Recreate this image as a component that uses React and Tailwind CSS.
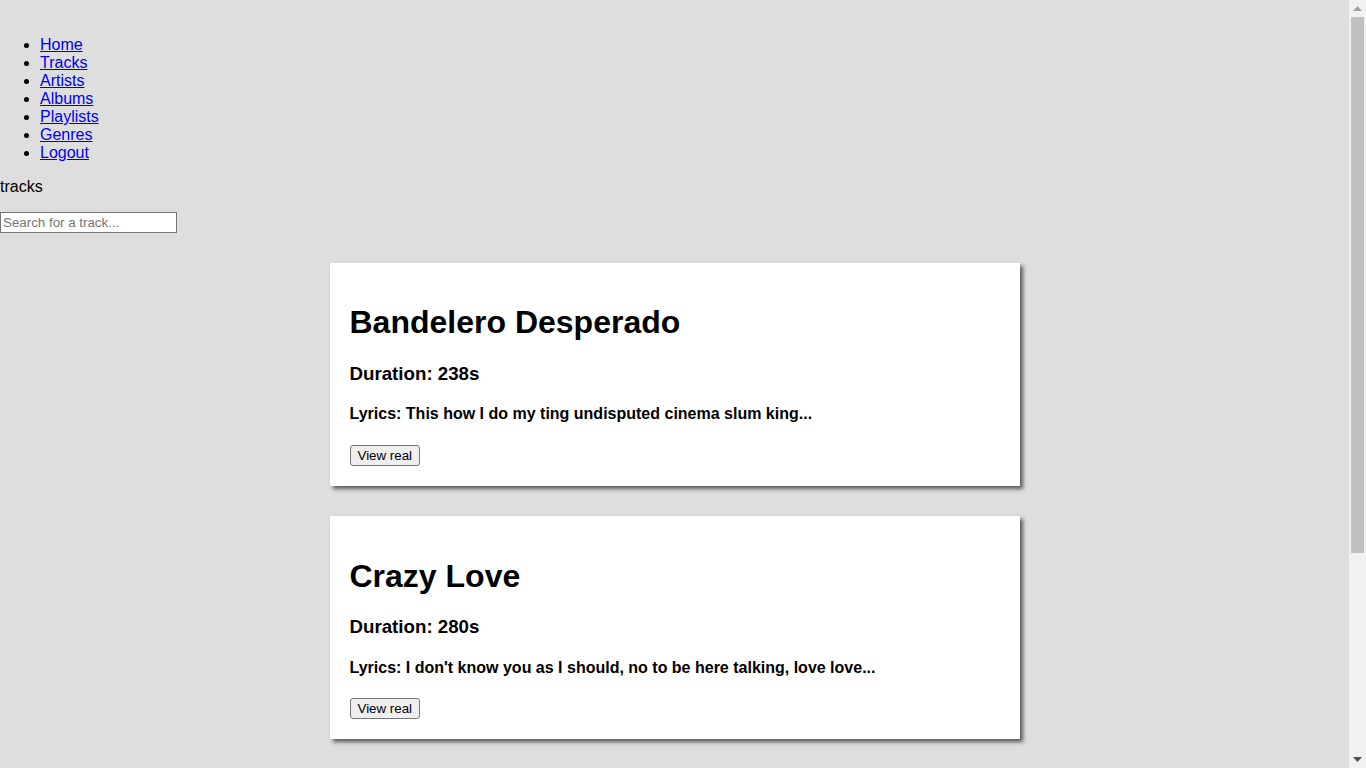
import React from 'react';

const links = ['Home', 'Tracks', 'Artists', 'Albums', 'Playlists', 'Genres', 'Logout'];

const tracks = [
  {
    title: 'Bandelero Desperado',
    duration: 238,
    lyrics: 'This how I do my ting undisputed cinema slum king...',
  },
  {
    title: 'Crazy Love',
    duration: 280,
    lyrics: "I don't know you as I should, no to be here talking, love love...",
  },
];

function TrackCard({ track }) {
  return (
    <div className="w-[690px] mx-auto bg-white px-5 pt-[41.44px] pb-5 shadow-[3px_3px_4px_rgba(0,0,0,0.6)] flex flex-col items-start">
      <h1 className="text-[32px] leading-[36.8px] font-bold">{track.title}</h1>
      <h3 className="mt-[21.44px] text-[18.72px] leading-[21.5px] font-bold">Duration: {track.duration}s</h3>
      <h4 className="mt-[21.28px] text-[16px] leading-[18.4px] font-bold">Lyrics: {track.lyrics}</h4>
      <button className="mt-[21.28px] h-[21px] px-[7px] text-[13.33px] leading-[15px] bg-[#efefef] border border-[#767676] rounded-[3px]">
        View real
      </button>
    </div>
  );
}

// fake browser scrollbar, the reference page is longer than the window
function Scrollbar() {
  return (
    <div className="w-[17px] h-screen bg-[#f1f1f1] flex flex-col items-center shrink-0">
      <div className="h-[17px] flex items-center justify-center">
        <svg width="9" height="5" viewBox="0 0 9 5"><path d="M4.5 0L9 5H0z" fill="#a3a3a3" /></svg>
      </div>
      <div className="w-[13px] h-[536px] bg-[#c1c1c1]" />
      <div className="flex-1" />
      <div className="h-[17px] flex items-center justify-center">
        <svg width="9" height="5" viewBox="0 0 9 5"><path d="M0 0H9L4.5 5z" fill="#505050" /></svg>
      </div>
    </div>
  );
}

export default function App() {
  return (
    <div className="flex h-screen overflow-hidden bg-[#dedede] text-black font-['Liberation_Sans',Arial,sans-serif] text-[16px]">
      <div className="flex-1 overflow-hidden pb-[30px]">
        <ul className="list-disc pl-10 pt-[36px] leading-[18px]">
          {links.map((l) => (
            <li key={l}>
              <a href="#" className="text-[#0000ee] underline">{l}</a>
            </li>
          ))}
        </ul>
        <p className="mt-4 leading-[18px]">tracks</p>
        <input
          type="text"
          placeholder="Search for a track..."
          className="mt-[16px] block w-[177px] h-[21px] px-[2px] bg-white border border-[#767676] text-[13.33px] placeholder:text-[#757575] outline-none"
        />
        <div className="mt-[30px] flex flex-col gap-[30px]">
          {tracks.map((t) => (
            <TrackCard key={t.title} track={t} />
          ))}
        </div>
      </div>
      <Scrollbar />
    </div>
  );
}
